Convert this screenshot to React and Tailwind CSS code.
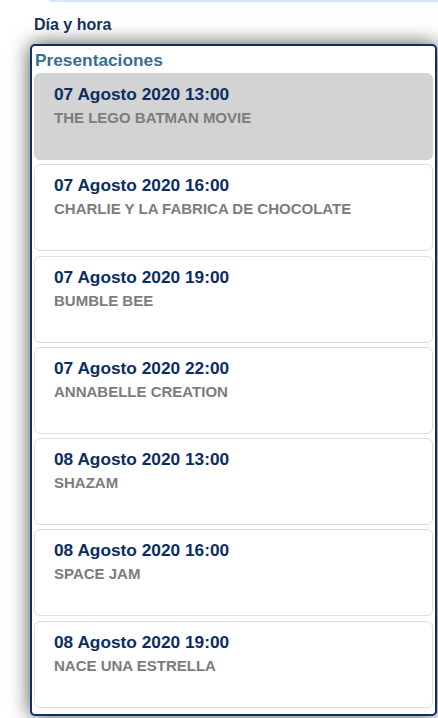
import React from "react";

const items = [
  ["07 Agosto 2020 13:00", "THE LEGO BATMAN MOVIE", true],
  ["07 Agosto 2020 16:00", "CHARLIE Y LA FABRICA DE CHOCOLATE"],
  ["07 Agosto 2020 19:00", "BUMBLE BEE"],
  ["07 Agosto 2020 22:00", "ANNABELLE CREATION"],
  ["08 Agosto 2020 13:00", "SHAZAM"],
  ["08 Agosto 2020 16:00", "SPACE JAM"],
  ["08 Agosto 2020 19:00", "NACE UNA ESTRELLA"],
];

export default function App() {
  return (
    <div className="w-[438px] h-[718px] bg-white overflow-hidden font-['Liberation_Sans',Arial,sans-serif]">
      <div className="ml-[49px] h-[2px] bg-[#d2e8fc]" />
      <div className="mt-[14px] pl-[34px] text-[16px] leading-[18px] font-bold text-[#16305a]">
        Día y hora
      </div>
      <div className="mt-[10px] ml-[30px] mr-[1px] h-[672px] border-2 border-[#0f2f62] rounded-[5px] bg-white shadow-[0_0_20px_rgba(0,0,0,0.7)] pt-[4px] px-[2px]">
        <div className="pl-[1px] text-[17.3px] leading-[20px] font-bold text-[#34708f]">
          Presentaciones
        </div>
        <div className="mt-[3px] flex flex-col gap-[4.3px]">
          {items.map(([t, s, active]) => (
            <div
              key={t}
              className={
                active
                  ? "h-[87px] rounded-[6px] border border-[#d3d3d3] bg-[#d3d3d3] pt-[10px] pl-[19px]"
                  : "h-[87px] rounded-[6px] border border-[#dedede] bg-white pt-[10px] pl-[19px]"
              }
            >
              <div className="text-[17.3px] leading-[20px] font-bold text-[#0b2d62]">{t}</div>
              <div className="mt-[5px] text-[15px] leading-[17px] font-bold text-[#7c7c7c]">{s}</div>
            </div>
          ))}
        </div>
      </div>
    </div>
  );
}
